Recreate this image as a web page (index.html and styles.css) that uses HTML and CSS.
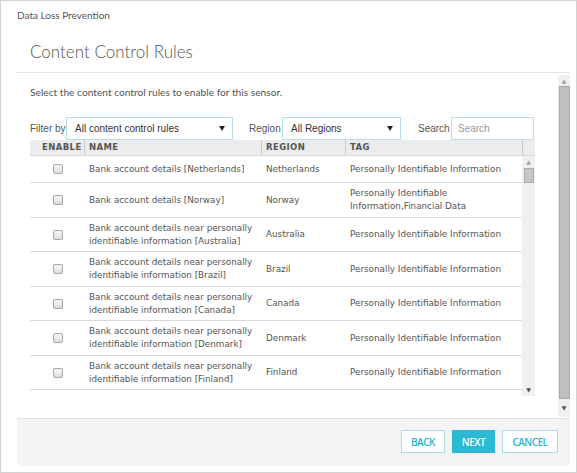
FILE: index.html
```html
<!DOCTYPE html>
<html>
<head>
<meta charset="utf-8">
<link rel="stylesheet" href="styles.css">
</head>
<body>
<div class="frame">
  <div class="apptitle">Data Loss Prevention</div>
  <div class="dialog">
    <div class="dlg-head">Content Control Rules</div>
    <div class="dlg-body">
      <div class="content">
        <p class="intro">Select the content control rules to enable for this sensor.</p>
        <div class="filters">
          <span class="lbl lbl-filter">Filter by</span>
          <div class="select sel-rules"><span>All content control rules</span><span class="caret"></span></div>
          <span class="lbl lbl-region">Region</span>
          <div class="select sel-region"><span>All Regions</span><span class="caret"></span></div>
          <span class="lbl lbl-search">Search</span>
          <div class="search">Search</div>
        </div>
        <div class="table">
          <div class="thead">
            <div class="th th-enable">ENABLE</div>
            <div class="th sep">NAME</div>
            <div class="th sep">REGION</div>
            <div class="th sep">TAG</div>
            <div class="th sep th-sb"></div>
          </div>
          <div class="tbody">
            <div class="rows">
              <div class="row first">
                <div class="td td-cb"><span class="cb"></span></div>
                <div class="td">Bank account details [Netherlands]</div>
                <div class="td">Netherlands</div>
                <div class="td">Personally Identifiable Information</div>
              </div>
              <div class="row">
                <div class="td td-cb"><span class="cb"></span></div>
                <div class="td">Bank account details [Norway]</div>
                <div class="td">Norway</div>
                <div class="td">Personally Identifiable Information,Financial Data</div>
              </div>
              <div class="row">
                <div class="td td-cb"><span class="cb"></span></div>
                <div class="td">Bank account details near personally identifiable information [Australia]</div>
                <div class="td">Australia</div>
                <div class="td">Personally Identifiable Information</div>
              </div>
              <div class="row">
                <div class="td td-cb"><span class="cb"></span></div>
                <div class="td">Bank account details near personally identifiable information [Brazil]</div>
                <div class="td">Brazil</div>
                <div class="td">Personally Identifiable Information</div>
              </div>
              <div class="row">
                <div class="td td-cb"><span class="cb"></span></div>
                <div class="td">Bank account details near personally identifiable information [Canada]</div>
                <div class="td">Canada</div>
                <div class="td">Personally Identifiable Information</div>
              </div>
              <div class="row">
                <div class="td td-cb"><span class="cb"></span></div>
                <div class="td">Bank account details near personally identifiable information [Denmark]</div>
                <div class="td">Denmark</div>
                <div class="td">Personally Identifiable Information</div>
              </div>
              <div class="row">
                <div class="td td-cb"><span class="cb"></span></div>
                <div class="td">Bank account details near personally identifiable information [Finland]</div>
                <div class="td">Finland</div>
                <div class="td">Personally Identifiable Information</div>
              </div>
              <div class="row">
                <div class="td td-cb"><span class="cb"></span></div>
                <div class="td">Bank account details near personally identifiable information [France]</div>
                <div class="td">France</div>
                <div class="td">Personally Identifiable Information</div>
              </div>
            </div>
            <div class="sb sb-inner">
              <div class="arrow up">&#9650;</div>
              <div class="thumb"></div>
              <div class="spacer"></div>
              <div class="arrow down">&#9660;</div>
            </div>
          </div>
        </div>
      </div>
      <div class="sb sb-outer">
        <div class="arrow up">&#9650;</div>
        <div class="thumb"></div>
        <div class="arrow down">&#9660;</div>
      </div>
    </div>
    <div class="dlg-foot">
      <button class="btn">BACK</button>
      <button class="btn primary">NEXT</button>
      <button class="btn">CANCEL</button>
    </div>
  </div>
</div>
</body>
</html>
```

FILE: styles.css
```css
* { box-sizing: border-box; }
html, body { margin: 0; padding: 0; background: #fff; }
.frame {
  width: 577px;
  height: 473px;
  border: 1px solid #d4d4d4;
  padding: 0 6px 6px 16px;
  display: flex;
  flex-direction: column;
  overflow: hidden;
}
.apptitle {
  height: 29px;
  padding-top: 8px;
  font-family: "Lato", "Open Sans", sans-serif;
  font-size: 10px;
  color: #555;
  line-height: 12px;
}
.dialog {
  flex: 1;
  display: flex;
  flex-direction: column;
  min-height: 0;
}
.dlg-head {
  height: 43px;
  border-bottom: 1px solid #e6e6e6;
  padding: 11px 0 0 13px;
  font-family: "Lato", sans-serif;
  font-weight: 300;
  font-size: 17px;
  line-height: 22px;
  color: #555;
}
.dlg-body {
  flex: 1;
  display: flex;
  min-height: 0;
}
.content {
  flex: 1;
  padding: 12px 22px 0 13px;
  overflow: hidden;
}
.intro {
  margin: 0 0 18px 0;
  font-family: "Lato", sans-serif;
  font-size: 10.2px;
  line-height: 14px;
  color: #555;
}
.filters {
  display: flex;
  align-items: center;
  height: 23px;
  font-family: "Liberation Sans", Arial, sans-serif;
  font-size: 10px;
  color: #555;
}
.lbl { display: block; white-space: nowrap; }
.lbl-filter { width: 36px; }
.lbl-region { width: 33px; margin-left: 16px; }
.lbl-search { width: 33px; margin-left: 17px; }
.select, .search {
  height: 23px;
  border: 1px solid #b5e0ea;
  background: #fff;
  display: flex;
  align-items: center;
  color: #333;
}
.select { justify-content: space-between; padding: 0 7px 0 8px; }
.sel-rules { width: 167px; }
.sel-region { width: 119px; }
.search { width: 83px; padding-left: 6px; color: #999; }
.caret {
  width: 0; height: 0;
  border-left: 3px solid transparent;
  border-right: 3px solid transparent;
  border-top: 5px solid #222;
}
.table { width: 505px; }
.thead {
  display: grid;
  grid-template-columns: 54px 177px 84px 177px 13px;
  height: 16px;
  background: #ececec;
  border-bottom: 1px solid #d8d8d8;
}
.th {
  font-family: "DejaVu Sans", Verdana, sans-serif;
  font-weight: bold;
  font-size: 8.5px;
  letter-spacing: 0.4px;
  color: #555;
  line-height: 15px;
  padding-left: 4px;
}
.th-enable { padding-left: 12px; }
.sep { border-left: 1px solid #c9c9c9; }
.tbody {
  display: flex;
  height: 240px;
  overflow: hidden;
}
.rows { width: 492px; }
.row {
  display: grid;
  grid-template-columns: 54px 177px 84px 177px;
  border-bottom: 1px solid #dadada;
  font-family: "DejaVu Sans", Verdana, sans-serif;
  font-size: 8.8px;
  line-height: 13px;
  color: #555;
}
.td {
  display: flex;
  align-items: center;
  padding: 4px 4px 3.5px 5px;
}
.row.first .td { min-height: 26px; }
.td-cb { justify-content: center; }
.cb {
  display: block;
  width: 10px;
  height: 10px;
  border: 1px solid #a7a7a7;
  border-radius: 2px;
  background: linear-gradient(#f6f6f6, #dedede);
}
.sb {
  display: flex;
  flex-direction: column;
  align-items: center;
  background: #f0f0f0;
}
.sb-inner { width: 13px; }
.arrow {
  font-size: 6px;
  line-height: 10px;
  height: 12px;
  display: flex;
  align-items: center;
  justify-content: center;
  color: #a3a3a3;
  font-family: "DejaVu Sans", sans-serif;
}
.sb-inner .arrow.up { height: 12px; }
.sb-inner .thumb {
  width: 10px;
  height: 15px;
  margin-left: 1px;
  background: #c6c6c6;
  border: 1px solid #adadad;
}
.spacer { flex: 1; }
.arrow.down { color: #505050; height: 12px; }
.sb-outer {
  width: 12px;
  margin-top: 2px;
  height: 342px;
}
.sb-outer .arrow.up { height: 11px; }
.sb-outer .thumb {
  width: 11px;
  flex: 1;
  background: #c0c0c0;
  border: 1px solid #a9a9a9;
  margin-left: 0;
}
.sb-outer .arrow.down { height: 18px; }
.dlg-foot {
  height: 48px;
  background: #f4f4f4;
  border-top: 1px solid #e3e3e3;
  border-radius: 0 0 4px 4px;
  display: flex;
  justify-content: flex-end;
  align-items: flex-start;
  padding: 11px 12px 0 0;
  gap: 7px;
}
.btn {
  height: 23px;
  border: 1px solid #a9dde8;
  background: #fff;
  color: #2bb4d2;
  font-family: "Open Sans", sans-serif;
  font-weight: 600;
  font-size: 10px;
  letter-spacing: -0.5px;
  padding: 0;
  margin: 0;
  cursor: pointer;
}
.btn:nth-child(1) { width: 44px; }
.btn.primary { width: 43px; background: #2bb9d6; border-color: #2bb9d6; color: #fff; }
.btn:nth-child(3) { width: 56px; }
```
